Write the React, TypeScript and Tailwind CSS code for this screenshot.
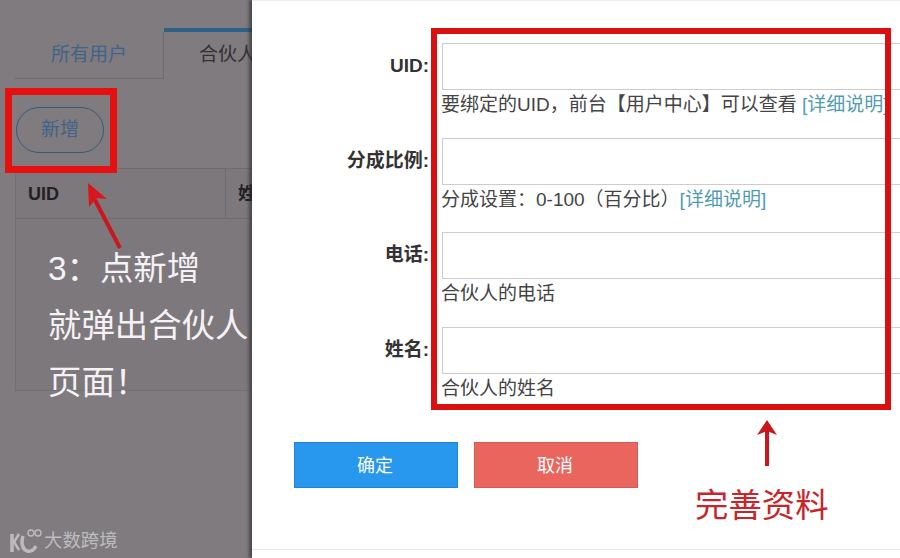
const fontCls = "font-['Liberation_Sans','Noto_Sans_CJK_SC',sans-serif]";

const rows = [
  { label: "UID", help: <>要绑定的UID，前台【用户中心】可以查看 <span className="text-[#4f9cb0]">[详细说明]</span></> },
  { label: "分成比例", help: <>分成设置：0-100（百分比）<span className="text-[#4f9cb0]">[详细说明]</span></> },
  { label: "电话", help: <>合伙人的电话</> },
  { label: "姓名", help: <>合伙人的姓名</> },
];

function BackgroundPage() {
  return (
    <div className="w-[252px] h-full shrink-0 bg-[#7f7b7f] overflow-hidden pl-[15px] pt-[28px]">
      <div className="flex w-[300px] h-[51px]">
        <div className="w-[149px] mt-[4px] flex items-center justify-center text-[19px] text-[#3f6488] border-r border-b border-[#6f6b6f]">所有用户</div>
        <div className="flex-1 border-t-4 border-[#2f6188] pl-[35px] pt-[9px] text-[19px] text-[#333033]">合伙人</div>
      </div>
      <div className="h-[89px] pt-[28px] pl-[1px]">
        <button className="w-[88px] h-[46px] rounded-full border border-[#345a7c] text-[19px] text-[#3f6488]">新增</button>
      </div>
      <div className="w-[300px] h-[223px] border-l border-b border-[#737073] bg-[#7c787c]">
        <div className="flex h-[51px] border-t border-b border-[#6f6b6f] text-[18px] font-bold text-[#232123]">
          <div className="w-[210px] pl-[12px] pt-[2px] flex items-center border-r border-[#6f6b6f]">UID</div>
          <div className="pl-[12px] pt-[2px] flex items-center">姓名</div>
        </div>
      </div>
    </div>
  );
}

function Dialog() {
  return (
    <div className="relative z-10 flex-1 h-full bg-white border-t border-[#eeeeee] shadow-[-3px_0_3px_rgba(40,38,40,0.6)] overflow-hidden">
      <div className="pt-[42px] pb-[54px] border-b border-[#e8e8ea] h-[549px]">
        {rows.map((r) => (
          <div key={r.label} className="flex h-[94.7px]">
            <div className="w-[178px] shrink-0 pr-[1px] pt-[11px] text-right text-[19px] font-bold text-[#333] leading-[24px] whitespace-nowrap">{r.label}:</div>
            <div className="ml-[12px] w-[520px] shrink-0">
              <input className="block w-full h-[47px] border border-[#cccccc] bg-white" />
              <div className="mt-[2px] -ml-[1px] text-[19px] leading-[26px] text-[#444] whitespace-nowrap">{r.help}</div>
            </div>
          </div>
        ))}
        <div className="flex gap-[16px] ml-[42px] mt-[20px]">
          <button className="w-[164px] h-[46px] pt-[3px] pr-[2px] bg-[#2897ee] border border-[#1f86d6] text-white text-[18px]">确定</button>
          <button className="w-[164px] h-[46px] pt-[3px] pr-[2px] bg-[#ea655d] border border-[#d75a53] text-white text-[18px]">取消</button>
        </div>
      </div>
    </div>
  );
}

export default function App() {
  return (
    <div className={`relative flex w-[900px] h-[558px] overflow-hidden bg-white ${fontCls}`}>
      <BackgroundPage />
      <Dialog />

      {/* annotations on top of the screenshot */}
      <div className="absolute z-20 left-[5px] top-[88px] w-[112px] h-[85px] border-[7px] border-[#e5100f]" />
      <div className="absolute z-20 left-[431px] top-[28px] w-[460px] h-[382px] border-[6px] border-[#d9100f]" />

      <svg className="absolute z-20 left-[80px] top-[178px]" width="50" height="74" viewBox="0 0 50 74">
        <path d="M40 70 L15 22" stroke="#c9181d" strokeWidth="4" fill="none" />
        <path d="M8 5 L27 21 L17 20 L9 29 Z" fill="#d8161b" />
      </svg>
      <svg className="absolute z-20 left-[752px] top-[418px]" width="30" height="50" viewBox="0 0 30 50">
        <path d="M15 12 V48" stroke="#c9181d" strokeWidth="4" fill="none" />
        <path d="M15 2 L25 17 L15 13 L5 17 Z" fill="#c9181d" />
      </svg>

      <div className="absolute z-20 left-[48px] top-[240px] text-[33.4px] leading-[57px] text-[#f4f2f4] whitespace-nowrap">
        <div>3：点新增</div>
        <div>就弹出合伙人</div>
        <div>页面！</div>
      </div>
      <div className="absolute z-20 left-[695px] top-[486px] text-[33.4px] leading-[40px] text-[#c8242a] whitespace-nowrap">完善资料</div>

      {/* watermark */}
      <div className="absolute z-20 left-[9px] top-[528px] flex items-center gap-[2px] text-[#bdbbbd]">
        <svg width="33" height="26" viewBox="0 0 33 26" fill="none" stroke="#bdbbbd">
          <path d="M3 6 V24" strokeWidth="3.5" />
          <path d="M10 6 L5 14 L10 22" strokeWidth="2.5" />
          <path d="M14 8 C12 14 13 21 18 23 C22 24 25 22 27 18" strokeWidth="3.5" />
          <circle cx="22" cy="5" r="3" strokeWidth="1.4" />
          <circle cx="29" cy="5" r="3" strokeWidth="1.4" />
        </svg>
        <span className="text-[18.4px] leading-[26px]">大数跨境</span>
      </div>
    </div>
  );
}
